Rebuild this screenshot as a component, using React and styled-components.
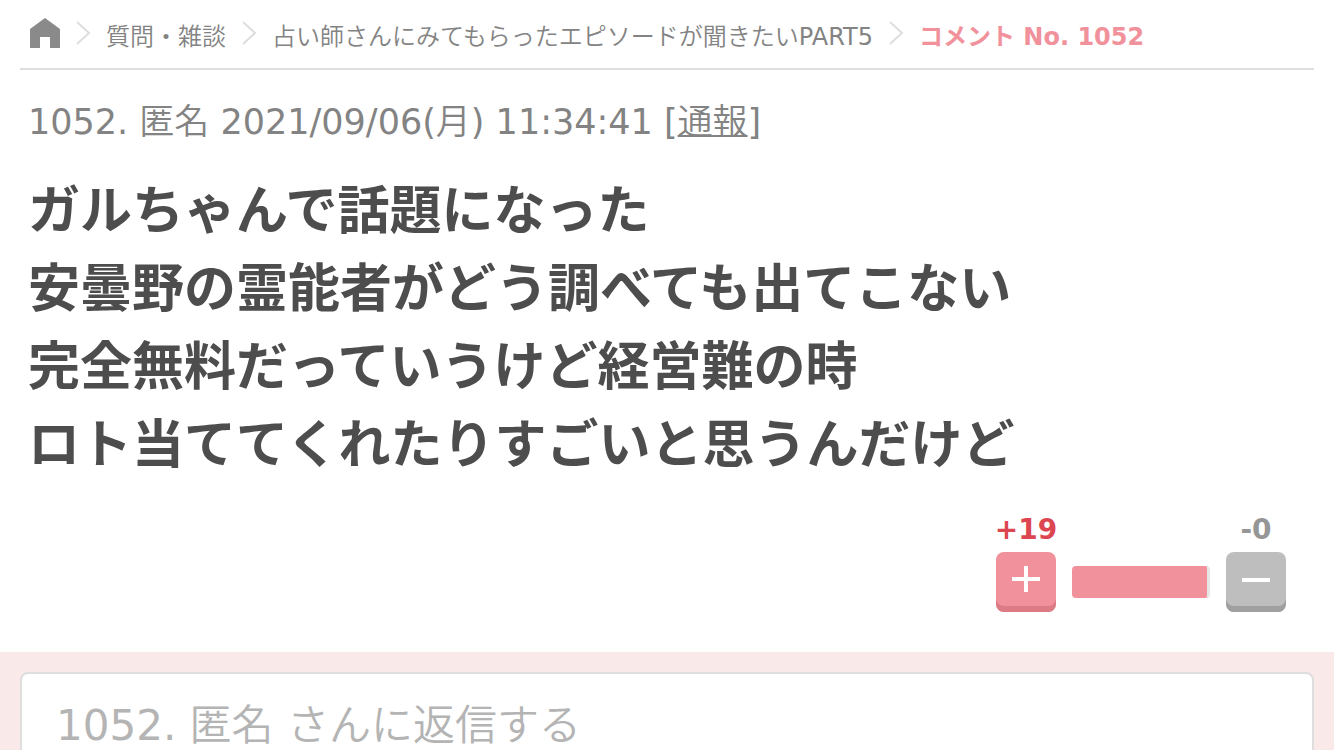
import React from "react";
import styled, { createGlobalStyle } from "styled-components";

const GlobalStyle = createGlobalStyle`
  *, *::before, *::after { box-sizing: border-box; }
  html, body { margin: 0; background: #fff; }
  body, button, textarea {
    font-family: "DejaVu Sans", "Noto Sans CJK JP DemiLight", "Noto Sans CJK JP Light", "Noto Sans CJK JP", sans-serif;
  }
`;

const Page = styled.main`
  height: 100vh;
  display: flex;
  flex-direction: column;
  overflow: hidden;
`;

const Breadcrumb = styled.nav`
  margin: 0 20px;
  padding-left: 10px;
  height: 70px;
  flex: none;
  border-bottom: 2px solid #dedede;
  display: flex;
  align-items: center;
  font-size: 24px;
  color: #838383;
  white-space: nowrap;
`;

const Crumb = styled.a`
  color: inherit;
  text-decoration: none;
  display: flex;
`;

const Current = styled.span`
  font-family: "DejaVu Sans", "Noto Sans CJK JP", sans-serif;
  color: #f0919b;
  font-weight: 700;
`;

const Separator = styled.svg`
  width: 16px;
  height: 28px;
  margin: 0 15px;
  flex: none;
`;

const Comment = styled.article`
  padding: 0 28px;
  flex: none;
`;

const Meta = styled.header`
  margin-top: 28px;
  font-size: 35px;
  line-height: 48px;
  color: #838383;
  white-space: nowrap;
`;

const Report = styled.a`
  color: inherit;
  text-decoration: underline;
  text-decoration-thickness: 2px;
`;

const Body = styled.p`
  margin: 22px 0 0;
  font-family: "Noto Sans CJK JP", sans-serif;
  font-size: 52px;
  line-height: 78px;
  font-weight: 700;
  color: #4d4d4d;
  white-space: nowrap;
`;

const Votes = styled.section`
  display: flex;
  justify-content: flex-end;
  align-items: flex-end;
  gap: 16px;
  margin: 34px 20px 40px 0;
`;

const Vote = styled.div`
  width: 60px;
  display: flex;
  flex-direction: column;
  align-items: center;
  gap: 6px;
  font-size: 28px;
  line-height: 32px;
  font-weight: 700;
  color: ${(p) => p.$color};
`;

const VoteButton = styled.button`
  width: 60px;
  height: 60px;
  padding: 0 0 6px;
  border: 0;
  border-radius: 8px;
  background: ${(p) => p.$face};
  box-shadow: inset 0 -6px ${(p) => p.$edge};
  display: grid;
  place-items: center;
`;

const Meter = styled.div`
  width: 138px;
  height: 32px;
  margin-bottom: 14px;
  border-radius: 4px;
  background: #f0919b;
  border-right: 3px solid #e6e6e6;
`;

const ReplyArea = styled.form`
  flex: 1 0 98px;
  padding: 20px 20px 0;
  background: #f9e9e9;
`;

const ReplyBox = styled.textarea`
  display: block;
  width: 100%;
  height: 200px;
  padding: 26px 34px;
  border: 2px solid #dedede;
  border-radius: 8px;
  background: #fff;
  resize: none;
  outline: 0;
  font-size: 42px;
  line-height: 52px;
  &::placeholder { color: #b4b4b4; opacity: 1; }
`;

const Chevron = () => (
  <Separator viewBox="0 0 16 28" aria-hidden="true">
    <path d="M2 2 L14 13 L2 24" fill="none" stroke="#dedede" strokeWidth="2" />
  </Separator>
);

export default function App() {
  return (
    <Page>
      <GlobalStyle />
      <Breadcrumb aria-label="パンくず">
        <Crumb href="#home" aria-label="ホーム">
          <svg width="30" height="32" viewBox="0 0 30 32">
            <path d="M15 0 L30 11 V30 H20 V19 H10 V30 H0 V11 Z" fill="#8a8a8a" />
          </svg>
        </Crumb>
        <Chevron />
        <Crumb href="#category">質問・雑談</Crumb>
        <Chevron />
        <Crumb href="#topic">占い師さんにみてもらったエピソードが聞きたいPART5</Crumb>
        <Chevron />
        <Current aria-current="page">コメント No. 1052</Current>
      </Breadcrumb>
      <Comment>
        <Meta>
          1052. 匿名 <time dateTime="2021-09-06T11:34:41">2021/09/06(月) 11:34:41</time> [<Report href="#report">通報</Report>]
        </Meta>
        <Body>
          ガルちゃんで話題になった<br />
          安曇野の霊能者がどう調べても出てこない<br />
          完全無料だっていうけど経営難の時<br />
          ロト当ててくれたりすごいと思うんだけど
        </Body>
        <Votes>
          <Vote $color="#dc4650">
            <span>+19</span>
            <VoteButton type="button" aria-label="プラス" $face="#f0919b" $edge="#dc7b85">
              <svg width="28" height="28" viewBox="0 0 28 28"><path d="M0 14 H28 M14 1 V27" stroke="#fff" strokeWidth="4" /></svg>
            </VoteButton>
          </Vote>
          <Meter />
          <Vote $color="#969696">
            <span>-0</span>
            <VoteButton type="button" aria-label="マイナス" $face="#bebebe" $edge="#a0a0a0">
              <svg width="28" height="28" viewBox="0 0 28 28"><path d="M0 15 H28" stroke="#fff" strokeWidth="4" /></svg>
            </VoteButton>
          </Vote>
        </Votes>
      </Comment>
      <ReplyArea>
        <ReplyBox aria-label="返信" placeholder="1052. 匿名 さんに返信する" />
      </ReplyArea>
    </Page>
  );
}
